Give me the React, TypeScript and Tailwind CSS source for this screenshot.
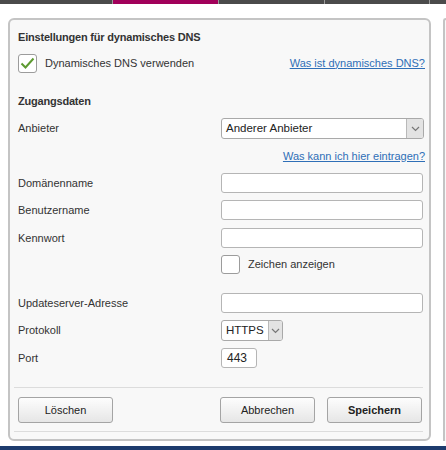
import React from "react";

const Check = () => (
  <svg width="15" height="13" viewBox="0 0 15 13" fill="none">
    <path d="M1.5 6.5 L5.5 10.5 L13.5 1.5" stroke="#5d9a31" strokeWidth="2" />
  </svg>
);

const Chevron = () => (
  <svg width="9" height="6" viewBox="0 0 9 6" fill="none">
    <path d="M1 1 L4.5 4.5 L8 1" stroke="#777" strokeWidth="1.2" />
  </svg>
);

const Row: React.FC<{ label: string; className?: string; children?: React.ReactNode }> = ({
  label,
  className = "",
  children,
}) => (
  <div className={`flex items-center ${className}`}>
    <div className="w-[203px] shrink-0">{label}</div>
    {children}
  </div>
);

const Input: React.FC<{ className?: string; value?: string }> = ({ className = "w-[202px]", value }) => (
  <div className={`h-full bg-white border border-[#b5b5b5] rounded-[3px] flex items-center px-[5px] text-[12px] text-[#222] ${className}`}>
    {value}
  </div>
);

const Select: React.FC<{ value: string; className: string }> = ({ value, className }) => (
  <div className={`h-full bg-white border border-[#a9a9a9] rounded-[3px] flex items-stretch ${className}`}>
    <div className="flex-1 flex items-center px-[4px] text-[11.5px] text-[#222]">{value}</div>
    <div className="w-[17px] bg-[#e3e3e3] border-l border-[#b9b9b9] flex items-center justify-center rounded-r-[2px]">
      <Chevron />
    </div>
  </div>
);

const Btn: React.FC<{ label: string; bold?: boolean }> = ({ label, bold }) => (
  <button
    className={`w-[95px] h-full rounded-[3px] border border-[#a4a4a4] bg-gradient-to-b from-[#fdfdfd] to-[#e6e6e6] text-[11px] text-[#222] ${bold ? "font-bold" : ""}`}
  >
    {label}
  </button>
);

const App: React.FC = () => {
  return (
    <div
      className="w-[446px] h-[450px] bg-white overflow-hidden flex flex-col text-[11px] text-[#333]"
      style={{ fontFamily: '"Liberation Sans", Arial, sans-serif' }}
    >
      {/* top tabs */}
      <div className="h-[4px] flex bg-[#4b4b4b]">
        <div className="w-[113px] border-r border-[#9a9a9a]" />
        <div className="w-[106px] bg-[#a1005a] border-r border-[#9a9a9a]" />
        <div className="w-[106px] border-r border-[#9a9a9a]" />
        <div className="w-[105px] border-r border-[#9a9a9a]" />
        <div className="flex-1" />
      </div>

      <div className="flex flex-1 pt-[14px]">
        <div className="ml-[8px] w-[423px] h-[423px] border-2 border-[#c4c4c4] rounded-[6px] bg-[#f8f8f8] flex flex-col pl-[8px] pr-[4px]">
          <div className="h-[18px] mt-[8px] flex items-center font-bold tracking-[-0.2px]">
            Einstellungen für dynamisches DNS
          </div>

          <div className="h-[20px] mt-[7px] flex items-center">
            <div className="w-[19px] h-[19px] bg-white border border-[#9c9c9c] rounded-[3px] flex items-center justify-center">
              <Check />
            </div>
            <span className="ml-[8px] flex-1">Dynamisches DNS verwenden</span>
            <span className="text-[#2f6fb7] underline">Was ist dynamisches DNS?</span>
          </div>

          <div className="h-[18px] mt-[19px] flex items-center font-bold tracking-[-0.2px]">Zugangsdaten</div>

          <Row label="Anbieter" className="h-[21px] mt-[8px]">
            <Select value="Anderer Anbieter" className="w-[203px]" />
          </Row>

          <div className="h-[18px] mt-[8px] flex items-center justify-end">
            <span className="text-[#2f6fb7] underline">Was kann ich hier eintragen?</span>
          </div>

          <Row label="Domänenname" className="h-[20px] mt-[8px]">
            <Input />
          </Row>
          <Row label="Benutzername" className="h-[20px] mt-[7px]">
            <Input />
          </Row>
          <Row label="Kennwort" className="h-[20px] mt-[8px]">
            <Input />
          </Row>
          <Row label="" className="h-[19px] mt-[7px]">
            <div className="w-[19px] h-[19px] bg-white border border-[#9c9c9c] rounded-[3px]" />
            <span className="ml-[8px]">Zeichen anzeigen</span>
          </Row>

          <Row label="Updateserver-Adresse" className="h-[20px] mt-[19px]">
            <Input />
          </Row>
          <Row label="Protokoll" className="h-[21px] mt-[7px]">
            <Select value="HTTPS" className="w-[62px]" />
          </Row>
          <Row label="Port" className="h-[20px] mt-[7px]">
            <Input className="w-[36px]" value="443" />
          </Row>

          <div className="mt-[19px] ml-[-4px] mr-[2px] border-t border-[#dcdcdc]" />

          <div className="h-[26px] mt-[9px] mr-[3px] flex">
            <Btn label="Löschen" />
            <div className="flex-1" />
            <Btn label="Abbrechen" />
            <div className="w-[12px]" />
            <Btn label="Speichern" bold />
          </div>

          <div className="mt-[8px] ml-[-4px] mr-[2px] border-t border-[#dcdcdc]" />
        </div>

        <div className="ml-[12px] flex-1 h-[423px] border-l-2 border-t-2 border-[#c4c4c4] rounded-tl-[6px] bg-[#f8f8f8]" />
      </div>

      <div className="h-[4px] bg-[#1d3b6d] mt-[2px]" />
    </div>
  );
};

export default App;
